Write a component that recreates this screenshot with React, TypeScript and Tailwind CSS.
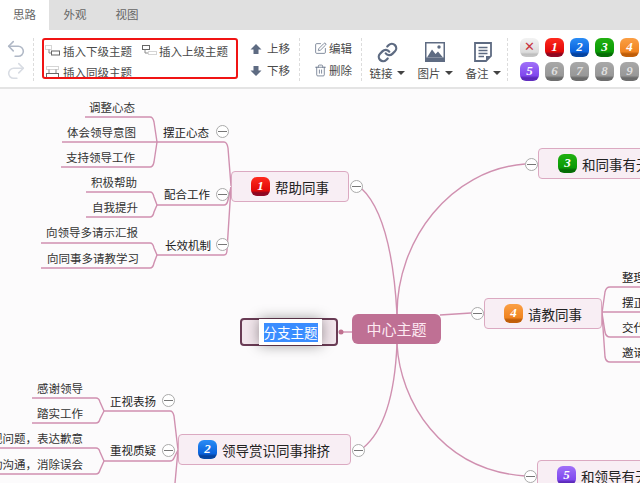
import React from "react";
import { Undo2, Redo2, Link as LinkIcon, SquarePen, Trash2 } from "lucide-react";

const P: Record<string, string> = {
  x: "bg-[linear-gradient(#f2f2f2,#dcdcdc_75%,#bdbdbd_85%,#c8c8c8)] text-[#c9343f]",
  "1": "bg-[linear-gradient(#ff2a1e,#e00808_72%,#8a0620_84%,#960a28)] text-white",
  "2": "bg-[linear-gradient(#2a8cf5,#0a62dc_72%,#06409a_84%,#064aa8)] text-white",
  "3": "bg-[linear-gradient(#22b012,#0a9a05_72%,#056a05_84%,#067206)] text-white",
  "4": "bg-[linear-gradient(#fb9f45,#f08420_72%,#bd5c08_84%,#c4620c)] text-white",
  "5": "bg-[linear-gradient(#a070f8,#8048ee_72%,#5a28b8_84%,#6230c0)] text-white",
  g: "bg-[linear-gradient(#a8a8a8,#989898_72%,#6a6a6a_84%,#707070)] text-[#dedede]",
};

function Badge({ n, tone }: { n: string; tone?: string }) {
  return (
    <div className={`w-[19px] h-[19px] rounded-[6px] flex items-center justify-center shrink-0 ${P[tone ?? n]}`}>
      {n === "x" ? (
        <span className="text-[13px] leading-none font-bold [font-family:'DejaVu_Sans',sans-serif] -mt-[2px]">✕</span>
      ) : (
        <span className="text-[13px] leading-none font-bold italic [font-family:'Liberation_Serif',serif] -mt-[2px]">{n}</span>
      )}
    </div>
  );
}

const Tab = ({ t, active }: { t: string; active?: boolean }) => (
  <div className={`h-full flex items-center justify-center text-[11.5px] ${active ? "w-[49px] bg-white text-[#666]" : "w-[52px] text-[#666]"}`}>{t}</div>
);

const Sep = ({ ml, mr }: { ml: string; mr: string }) => (
  <div className={`h-[43px] mt-[2px] border-l border-dashed border-[#dcdcdc] ${ml} ${mr}`} />
);

const ChildIcon = () => (
  <svg width="15" height="12" viewBox="0 0 15 12" fill="none" className="shrink-0">
    <rect x="0.5" y="0.5" width="6" height="4" stroke="#aaa" strokeDasharray="1 1" />
    <path d="M4 4.5V8H6" stroke="#888" />
    <rect x="6.5" y="6" width="8" height="4" stroke="#666" />
  </svg>
);
const ParentIcon = () => (
  <svg width="15" height="12" viewBox="0 0 15 12" fill="none" className="shrink-0">
    <rect x="0.5" y="0.5" width="7" height="4" stroke="#666" />
    <path d="M3 4.5V8H6" stroke="#888" />
    <rect x="6.5" y="6.5" width="8" height="3" stroke="#aaa" strokeDasharray="1 1" />
  </svg>
);
const SiblingIcon = () => (
  <svg width="15" height="12" viewBox="0 0 15 12" fill="none" className="shrink-0">
    <rect x="1.5" y="0.5" width="12" height="3" stroke="#aaa" strokeDasharray="1 1" />
    <path d="M4 3.5V7M11 3.5V7" stroke="#888" />
    <rect x="1.5" y="7.5" width="12" height="4" stroke="#666" />
  </svg>
);

const Arrow = ({ down }: { down?: boolean }) => (
  <svg width="12" height="12" viewBox="0 0 12 12" className={down ? "rotate-180" : ""}>
    <path d="M6 1L11.5 6.5H8.5V11H3.5V6.5H.5Z" fill="#5e6b82" />
  </svg>
);

const ImgIcon = () => (
  <svg width="20" height="20" viewBox="0 0 20 20">
    <rect x="0" y="0" width="20" height="20" fill="#5e6b82" />
    <rect x="1.5" y="1.5" width="17" height="14" fill="#fff" />
    <circle cx="14" cy="5" r="1.7" fill="#5e6b82" />
    <path d="M2 15.5L7 7.5L10.5 12L13 9.5L18 15.5Z" fill="#5e6b82" />
  </svg>
);
const NoteIcon = () => (
  <svg width="18" height="20" viewBox="0 0 18 20" fill="none">
    <path d="M1 1H17V14L12 19H1Z" stroke="#5e6b82" strokeWidth="1.8" />
    <path d="M4.5 5.5H13.5M4.5 8.5H13.5M4.5 11.5H13.5M4.5 14.5H10" stroke="#5e6b82" strokeWidth="1.3" />
    <path d="M12 19V14H17Z" fill="#5e6b82" />
  </svg>
);

const BigTool = ({ icon, label, w }: { icon: React.ReactNode; label: string; w: string }) => (
  <div className={`flex flex-col items-center mt-[2px] ${w}`}>
    <div className="h-[21px] mt-[3px] flex items-center justify-center">{icon}</div>
    <div className="mt-[2px] flex items-center gap-[4px] text-[11.5px] leading-[16px] text-[#4a4a4a] whitespace-nowrap">
      {label}
      <span className="w-0 h-0 border-x-[4px] border-x-transparent border-t-[4px] border-t-[#444]" />
    </div>
  </div>
);

function Toolbar() {
  return (
    <div className="h-[59px] shrink-0 border-b-2 border-[#e4e4e4] bg-white flex items-center pl-[6px] text-[11.5px] text-[#4a4a4a]">
      <div className="flex flex-col items-center gap-0 w-[19px] mt-[2px]">
        <Undo2 size={22} strokeWidth={1.7} color="#b0b8c6" />
        <Redo2 size={22} strokeWidth={1.7} color="#d8dce3" />
      </div>
      <Sep ml="ml-[8px]" mr="mr-[8px]" />
      <div className="w-[196px] h-[41px] border-2 border-[#f01414] rounded-[3px] pl-[1px] overflow-hidden flex flex-col shrink-0">
        <div className="flex items-center h-[21px] shrink-0">
          <ChildIcon />
          <span className="ml-[3px] leading-[14px] whitespace-nowrap">插入下级主题</span>
          <span className="ml-[10px]"><ParentIcon /></span>
          <span className="ml-[2px] leading-[14px] whitespace-nowrap">插入上级主题</span>
        </div>
        <div className="flex items-center h-[22px] shrink-0">
          <SiblingIcon />
          <span className="ml-[3px] leading-[14px] whitespace-nowrap">插入同级主题</span>
        </div>
      </div>
      <div className="ml-[12px] w-[42px] mt-[2px] flex flex-col gap-[8px]">
        <div className="flex items-center gap-[5px] h-[14px] whitespace-nowrap"><Arrow /><span>上移</span></div>
        <div className="flex items-center gap-[5px] h-[14px] whitespace-nowrap"><Arrow down /><span>下移</span></div>
      </div>
      <Sep ml="ml-[7px]" mr="mr-[14px]" />
      <div className="w-[38px] mt-[2px] flex flex-col gap-[8px]">
        <div className="flex items-center gap-[2px] h-[14px] whitespace-nowrap"><SquarePen size={13} strokeWidth={1.4} color="#5e6b82" className="shrink-0" /><span>编辑</span></div>
        <div className="flex items-center gap-[2px] h-[14px] whitespace-nowrap"><Trash2 size={13} strokeWidth={1.4} color="#5e6b82" className="shrink-0" /><span>删除</span></div>
      </div>
      <Sep ml="ml-[9px]" mr="mr-[7px]" />
      <BigTool w="w-[36px]" label="链接" icon={<LinkIcon size={21} strokeWidth={2.6} color="#5e6b82" />} />
      <div className="w-[12px]" />
      <BigTool w="w-[36px]" label="图片" icon={<ImgIcon />} />
      <div className="w-[12px]" />
      <BigTool w="w-[36px]" label="备注" icon={<NoteIcon />} />
      <Sep ml="ml-[6px]" mr="mr-[12px]" />
      <div className="flex flex-col gap-[5px] shrink-0 mt-[2px]">
        <div className="flex gap-[6px]">
          <Badge n="x" /><Badge n="1" /><Badge n="2" /><Badge n="3" /><Badge n="4" />
        </div>
        <div className="flex gap-[6px]">
          <Badge n="5" /><Badge n="6" tone="g" /><Badge n="7" tone="g" /><Badge n="8" tone="g" /><Badge n="9" tone="g" />
        </div>
      </div>
    </div>
  );
}

const LINES = [
  "M157 142H224Q227 142 228 148L231 186",
  "M157 205H224Q227 205 228 200L231 187",
  "M157 255H224Q227 255 227 250L231 187",
  "M85 117H150Q153 117 154 122L157 142",
  "M62 142H157",
  "M61 167H150Q153 167 154 162L157 142",
  "M86 192H150Q153 192 154 197L157 205",
  "M86 217H150Q153 217 154 212L157 205",
  "M41 243H150Q153 243 154 248L157 255",
  "M41 268H150Q153 268 154 263L157 255",
  "M104 411H170Q173 411 174 416L178 450",
  "M104 461H170Q173 461 174 458L178 450",
  "M178 450L175 483",
  "M32 398H96Q99 398 100 402L104 411",
  "M32 423H96Q99 423 100 419L104 411",
  "M0 448H96Q99 448 100 452L104 461",
  "M0 474H96Q99 474 100 470L104 461",
  "M602 313L605 292Q606 287 610 287H640",
  "M602 313V312H640",
  "M602 313L605 332Q606 337 610 337H640",
  "M602 313L605 357Q606 362 610 362H640",
  "M397 314C397 240 450 170 525 164",
  "M397 314C394 260 385 210 361 188",
  "M397 344C395 390 385 430 363 448",
  "M397 344C400 400 440 470 525 476",
  "M440 315L471 313",
  "M341 332H352",
];

const TEXTS: [number, number, string, string?][] = [
  [89, 107, "调整心态"],
  [67, 132, "体会领导意图"],
  [66, 157, "支持领导工作"],
  [91, 182, "积极帮助"],
  [92, 207, "自我提升"],
  [46, 232, "向领导多请示汇报"],
  [47, 258, "向同事多请教学习"],
  [163, 132, "摆正心态", "text-[#222]"],
  [164, 194, "配合工作", "text-[#222]"],
  [165, 245, "长效机制", "text-[#222]"],
  [37, 388, "感谢领导"],
  [37, 413, "踏实工作"],
  [110, 401, "正视表扬", "text-[#222]"],
  [110, 450, "重视质疑", "text-[#222]"],
  [-20.5, 438, "重视问题，表达歉意"],
  [-20.5, 464, "主动沟通，消除误会"],
  [622, 277, "整理问题", "text-[#222]"],
  [622, 302, "摆正心态", "text-[#222]"],
  [622, 327, "交代背景", "text-[#222]"],
  [622, 352, "邀请帮助", "text-[#222]"],
];

const CIRCLES: [number, number][] = [
  [222, 131], [222, 194], [222, 244], [356, 186], [168, 400], [168, 450], [358, 450], [531, 164], [477, 313], [530, 476],
];

const MAINS: { x: number; y: number; w: number; n: string; t: string }[] = [
  { x: 231, y: 171, w: 118, n: "1", t: "帮助同事" },
  { x: 178, y: 434, w: 173, n: "2", t: "领导赏识同事排挤" },
  { x: 538, y: 148, w: 140, n: "3", t: "和同事有无矛盾" },
  { x: 484, y: 298, w: 118, n: "4", t: "请教同事" },
  { x: 537, y: 460, w: 140, n: "5", t: "和领导有无矛盾" },
];

function MindMap() {
  return (
    <div className="relative flex-1 overflow-hidden bg-[#fcfbfc]">
      <div className="absolute left-0 top-[-89px] w-[640px] h-[483px]">
        <svg className="absolute inset-0" width="640" height="483" fill="none">
          {LINES.map((d, i) => (
            <path key={i} d={d} stroke="#d090b0" strokeWidth="1.4" />
          ))}
          <circle cx="341" cy="332" r="2.5" fill="#c0708f" />
        </svg>

        {TEXTS.map(([x, y, t, c], i) => (
          <div
            key={i}
            className={`absolute text-[11.5px] leading-[14px] whitespace-nowrap ${c ?? "text-[#333]"}`}
            style={{ left: x, top: y - 7 }}
          >
            {t}
          </div>
        ))}

        {CIRCLES.map(([x, y], i) => (
          <div
            key={i}
            className="absolute w-[13px] h-[13px] rounded-full border border-[#aaa] bg-white flex items-center justify-center"
            style={{ left: x - 6, top: y - 6 }}
          >
            <div className="w-[9px] h-px bg-[#777]" />
          </div>
        ))}

        {MAINS.map((m) => (
          <div
            key={m.n}
            className="absolute h-[31px] border-[1.5px] border-[#dba9c1] rounded-[4px] bg-[#f8eef4] flex items-center gap-[5px] whitespace-nowrap pl-[19px]"
            style={{ left: m.x, top: m.y, width: m.w }}
          >
            <Badge n={m.n} />
            <span className="text-[13.5px] leading-[18px] text-[#222]">{m.t}</span>
          </div>
        ))}

        <div className="absolute left-[352px] top-[314px] w-[89px] h-[30px] rounded-[6px] bg-[#bf7094] flex items-center justify-center text-[15px] text-[#fde9f2]">
          中心主题
        </div>

        <div className="absolute left-[240px] top-[318px] w-[98px] h-[28px] border-2 border-[#6a3c55] rounded-[4px] bg-[#f3e7ed] flex items-center justify-center">
          <div className="ml-[3px] w-[63px] h-[26px] bg-white shadow-[0_0_14px_rgba(0,0,0,0.4)] flex items-center justify-center">
            <span className="bg-[#3a8dff] text-white text-[13.5px] leading-[19px] whitespace-nowrap">分支主题</span>
          </div>
        </div>
      </div>
    </div>
  );
}

export default function App() {
  return (
    <div className="w-[640px] h-[483px] flex flex-col overflow-hidden bg-white [font-family:'Noto_Sans_CJK_SC','Liberation_Sans',sans-serif]">
      <div className="h-[30px] shrink-0 bg-[#e0e0e0] flex">
        <Tab t="思路" active />
        <Tab t="外观" />
        <Tab t="视图" />
      </div>
      <Toolbar />
      <MindMap />
    </div>
  );
}
